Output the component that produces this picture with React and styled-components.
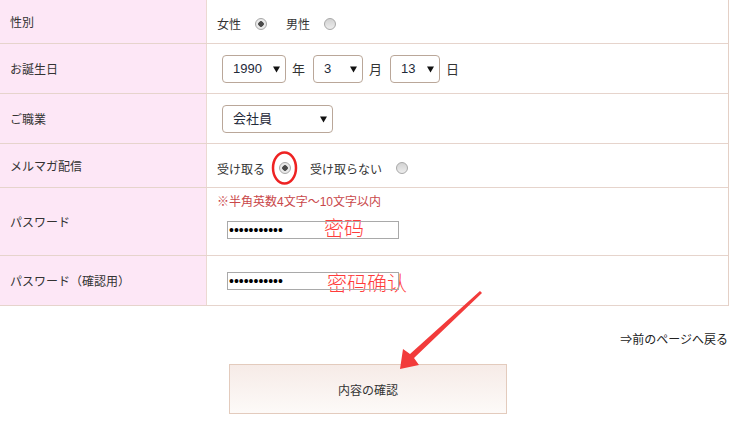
import React from 'react'
import styled, { createGlobalStyle } from 'styled-components';

const GlobalStyle = createGlobalStyle`
    body {
        margin: 0;
        background: #ffffff;
        font-family: "Liberation Sans", "Noto Sans CJK JP", sans-serif;
        color: #333333;
    }
`;

const Page = styled.div`
    position: relative;
    width: 730px;
    height: 446px;
    overflow: hidden;
`;

const FormTable = styled.div`
    width: 729px;
    border-right: 1px solid #e4d0c6;
    box-sizing: border-box;
`;

const Row = styled.div`
    display: grid;
    grid-template-columns: 207px 1fr;
    height: ${props => props.$height}px;
    border-bottom: 1px solid #e6d4cc;
    box-sizing: border-box;
`;

const Label = styled.div`
    display: flex;
    align-items: center;
    padding-left: 10px;
    background-color: #fde7f6;
    border-right: 1px solid #ecd9d2;
    font-size: 12px;
    color: #333333;
`;

const Cell = styled.div`
    position: relative;
    display: flex;
    flex-direction: ${props => props.$column ? 'column' : 'row'};
    align-items: ${props => props.$column ? 'flex-start' : 'center'};
    padding-left: 10px;
    padding-top: ${props => props.$top || 0}px;
    font-size: 12px;
    color: #333333;
`;

const Choice = styled.span`
    display: inline-flex;
    align-items: center;
    margin-right: 19px;
`;

const Radio = styled.span`
    display: inline-block;
    position: relative;
    width: 12px;
    height: 12px;
    margin-left: 14px;
    border-radius: 50%;
    box-sizing: border-box;
    border: 1px solid #a8a8a8;
    background: ${props => props.$checked
        ? 'radial-gradient(circle, #4a4a4a 0 2.5px, #e9e9e9 3px)'
        : 'linear-gradient(#d2d2d2, #ededed)'};
`;

const SelectWrap = styled.span`
    position: relative;
    display: inline-flex;
    margin-left: ${props => props.$first ? 5 : 0}px;
`;

const Select = styled.select`
    appearance: none;
    -webkit-appearance: none;
    width: ${props => props.$width}px;
    height: 28px;
    padding: 0 0 0 10px;
    border: 1px solid #baa799;
    border-radius: 4px;
    background: #ffffff;
    font-family: "Liberation Sans", "Noto Sans CJK JP", sans-serif;
    font-size: 13px;
    color: #1f2a3a;
    outline: none;
`;

const Caret = styled.svg`
    position: absolute;
    right: 6px;
    top: 11px;
    pointer-events: none;
`;

const Unit = styled.span`
    margin: 0 8px 0 6px;
    font-size: 13px;
`;

const Note = styled.div`
    font-size: 12px;
    line-height: 16px;
    color: #c9474a;
`;

const PassInput = styled.input`
    position: relative;
    z-index: 1;
    width: 172px;
    height: 18px;
    margin-left: 10px;
    margin-top: ${props => props.$top || 0}px;
    padding: 0 1px;
    box-sizing: border-box;
    border: 1px solid #a9a9a9;
    background: transparent;
    font-size: 14px;
    color: #000000;
    outline: none;
`;

const Annotation = styled.span`
    position: absolute;
    z-index: 0;
    left: ${props => props.$left}px;
    top: ${props => props.$top}px;
    font-family: "Noto Sans CJK SC", sans-serif;
    font-weight: 300;
    font-size: 20px;
    line-height: 20px;
    color: #ff3b3b;
    white-space: nowrap;
`;

const BackLink = styled.div`
    margin-top: 25px;
    padding-right: 2px;
    text-align: right;
    font-size: 12px;
    line-height: 18px;
    color: #222222;
`;

const ButtonRow = styled.div`
    display: flex;
    justify-content: center;
    margin-top: 15px;
    padding-left: 6px;
`;

const ConfirmButton = styled.button`
    width: 278px;
    height: 50px;
    border: 1px solid #e3cbbd;
    background: linear-gradient(#f6ebe7, #fdfaf8);
    font-family: "Liberation Sans", "Noto Sans CJK JP", sans-serif;
    font-size: 12px;
    color: #333333;
`;

const Overlay = styled.svg`
    position: absolute;
    left: 0;
    top: 0;
    pointer-events: none;
`;

const Dropdown = ({ width, value, first, options }) => (
    <SelectWrap $first={first}>
        <Select $width={width} defaultValue={value}>
            {options.map(o => <option key={o} value={o}>{o}</option>)}
        </Select>
        <Caret width="7" height="7" viewBox="0 0 7 7">
            <path d="M0 0.5 H7 L3.5 6.5 Z" fill="#111" />
        </Caret>
    </SelectWrap>
);

const App = () => {
    return (
        <>
            <GlobalStyle />
            <Page>
                <FormTable>
                    <Row $height={44}>
                        <Label>性別</Label>
                        <Cell $top={4}>
                            <Choice>女性<Radio $checked /></Choice>
                            <Choice>男性<Radio /></Choice>
                        </Cell>
                    </Row>
                    <Row $height={50}>
                        <Label>お誕生日</Label>
                        <Cell>
                            <Dropdown first width={64} value="1990" options={['1989', '1990', '1991']} />
                            <Unit>年</Unit>
                            <Dropdown width={50} value="3" options={['1', '2', '3', '4']} />
                            <Unit>月</Unit>
                            <Dropdown width={50} value="13" options={['12', '13', '14']} />
                            <Unit>日</Unit>
                        </Cell>
                    </Row>
                    <Row $height={50}>
                        <Label>ご職業</Label>
                        <Cell>
                            <Dropdown first width={111} value="会社員" options={['会社員', '学生', 'その他']} />
                        </Cell>
                    </Row>
                    <Row $height={44}>
                        <Label>メルマガ配信</Label>
                        <Cell $top={5}>
                            <Choice>受け取る<Radio $checked /></Choice>
                            <Choice>受け取らない<Radio /></Choice>
                        </Cell>
                    </Row>
                    <Row $height={68}>
                        <Label>パスワード</Label>
                        <Cell $column $top={6}>
                            <Note>※半角英数4文字～10文字以内</Note>
                            <PassInput $top={11} type="password" defaultValue="abcdefghijk" />
                            <Annotation $left={117} $top={30}>密码</Annotation>
                        </Cell>
                    </Row>
                    <Row $height={50}>
                        <Label>パスワード（確認用）</Label>
                        <Cell>
                            <PassInput type="password" defaultValue="abcdefghijk" />
                            <Annotation $left={120} $top={17}>密码确认</Annotation>
                        </Cell>
                    </Row>
                </FormTable>

                <BackLink>⇒前のページへ戻る</BackLink>
                <ButtonRow>
                    <ConfirmButton>内容の確認</ConfirmButton>
                </ButtonRow>

                <Overlay width="730" height="446" viewBox="0 0 730 446">
                    <ellipse cx="284.5" cy="168" rx="11.5" ry="15.5" fill="none" stroke="#ee2222" strokeWidth="2.5" />
                    <polygon
                        points="480,291 410,354 403,349 400,369 419,365 414,358 482,293"
                        fill="#f23b3b"
                    />
                </Overlay>
            </Page>
        </>
    )
};

export default App
